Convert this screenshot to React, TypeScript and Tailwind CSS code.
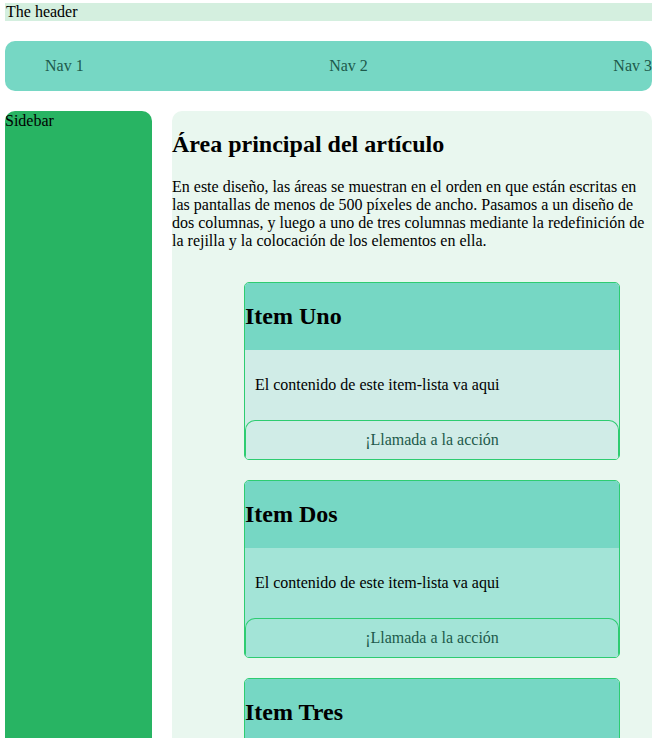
const items = [
  { title: "Item Uno", body: "bg-[#d0ece7]" },
  { title: "Item Dos", body: "bg-[#a3e4d7]" },
  { title: "Item Tres", body: "bg-[#d0ece7]" },
];

function Card({ title, body }: { title: string; body: string }) {
  return (
    <li className="flex flex-col overflow-hidden rounded-[5px] border border-[#2ecc71]">
      <div className="bg-[#76d7c4] py-[20px]">
        <h2 className="text-[24px] font-bold leading-[27px]">{title}</h2>
      </div>
      <div className={`${body} flex flex-col`}>
        <p className="p-[10px] py-[26px]">El contenido de este item-lista va aqui</p>
        <button
          type="button"
          className="h-[39px] rounded-t-[10px] border-x border-t border-[#2ecc71] text-center text-[#1d5a4b]"
        >
          ¡Llamada a la acción
        </button>
      </div>
    </li>
  );
}

export default function App() {
  return (
    <div className="flex flex-col gap-[20px] px-[5px] pt-[3px] font-['Liberation_Serif',serif] text-[16px] leading-[18px] text-black">
      <header className="bg-[#d4efdf] pl-[1px]">The header</header>

      <nav>
        <ul className="flex h-[50px] items-center justify-between rounded-[10px] bg-[#76d7c4] pl-[40px] text-[#1d5a4b]">
          <li>Nav 1</li>
          <li>Nav 2</li>
          <li>Nav 3</li>
        </ul>
      </nav>

      <div className="flex gap-[20px]">
        <aside className="w-[147px] shrink-0 rounded-t-[10px] bg-[#28b463] pt-[1px]">Sidebar</aside>

        <main className="flex-1 rounded-[10px] bg-[#e9f7ef] pb-[20px]">
          <h2 className="mt-[20px] text-[24px] font-bold leading-[27px]">Área principal del artículo</h2>
          <p className="mt-[20px]">
            En este diseño, las áreas se muestran en el orden en que están escritas en las pantallas de menos de 500
            píxeles de ancho. Pasamos a un diseño de dos columnas, y luego a uno de tres columnas mediante la
            redefinición de la rejilla y la colocación de los elementos en ella.
          </p>
          <ul className="ml-[72px] mt-[32px] flex w-[376px] flex-col gap-[20px]">
            {items.map((it) => (
              <Card key={it.title} title={it.title} body={it.body} />
            ))}
          </ul>
        </main>
      </div>
    </div>
  );
}
